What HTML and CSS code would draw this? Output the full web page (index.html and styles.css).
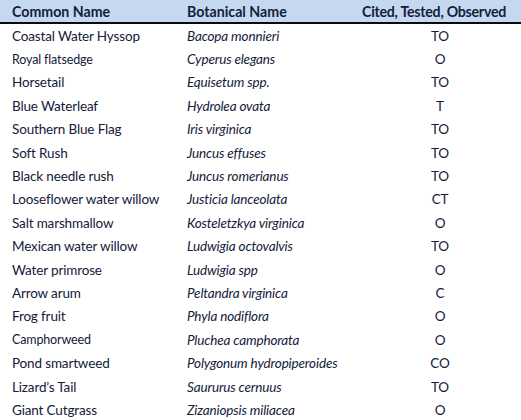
FILE: index.html
```html
<!DOCTYPE html>
<html>
<head>
<meta charset="utf-8">
<link rel="stylesheet" href="styles.css">
</head>
<body>
<table class="plants">
  <thead>
    <tr><th class="c1">Common Name</th><th class="c2">Botanical Name</th><th class="c3">Cited, Tested, Observed</th></tr>
  </thead>
  <tbody>
    <tr><td>Coastal Water Hyssop</td><td class="bot">Bacopa monnieri</td><td class="code">TO</td></tr>
    <tr><td class="small">Royal flatsedge</td><td class="bot">Cyperus elegans</td><td class="code">O</td></tr>
    <tr><td>Horsetail</td><td class="bot">Equisetum spp.</td><td class="code">TO</td></tr>
    <tr><td>Blue Waterleaf</td><td class="bot">Hydrolea ovata</td><td class="code">T</td></tr>
    <tr><td>Southern Blue Flag</td><td class="bot">Iris virginica</td><td class="code">TO</td></tr>
    <tr><td>Soft Rush</td><td class="bot">Juncus effuses</td><td class="code">TO</td></tr>
    <tr><td>Black needle rush</td><td class="bot">Juncus romerianus</td><td class="code">TO</td></tr>
    <tr><td>Looseflower water willow</td><td class="bot">Justicia lanceolata</td><td class="code">CT</td></tr>
    <tr><td>Salt marshmallow</td><td class="bot">Kosteletzkya virginica</td><td class="code">O</td></tr>
    <tr><td>Mexican water willow</td><td class="bot">Ludwigia octovalvis</td><td class="code">TO</td></tr>
    <tr><td>Water primrose</td><td class="bot">Ludwigia spp</td><td class="code">O</td></tr>
    <tr><td>Arrow arum</td><td class="bot">Peltandra virginica</td><td class="code">C</td></tr>
    <tr><td>Frog fruit</td><td class="bot">Phyla nodiflora</td><td class="code">O</td></tr>
    <tr><td class="small">Camphorweed</td><td class="bot">Pluchea camphorata</td><td class="code">O</td></tr>
    <tr><td>Pond smartweed</td><td class="bot">Polygonum hydropiperoides</td><td class="code">CO</td></tr>
    <tr><td>Lizard’s Tail</td><td class="bot">Saururus cernuus</td><td class="code">TO</td></tr>
    <tr><td>Giant Cutgrass</td><td class="bot">Zizaniopsis miliacea</td><td class="code">O</td></tr>
  </tbody>
</table>
</body>
</html>
```
FILE: styles.css
```css
html, body {
  margin: 0;
  padding: 0;
  background: #ffffff;
}
body {
  font-family: Lato, "Liberation Sans", sans-serif;
  font-size: 13.5px;
  letter-spacing: -0.15px;
  color: #14203a;
}
.plants {
  border-collapse: collapse;
  width: 521px;
  table-layout: fixed;
}
.plants th {
  background: #c6d8ef;
  font-weight: 700;
  font-size: 14.2px;
  letter-spacing: 0;
  height: 22px;
  padding: 0;
  border-bottom: 2px solid #0c0c0c;
  text-align: left;
  vertical-align: middle;
  white-space: nowrap;
}
.plants th.c1 { width: 175px; padding-left: 12px; }
.plants th.c2 { width: 175px; }
.plants th.c3 { text-align: right; padding-right: 15px; letter-spacing: -0.25px; }
.plants td {
  height: 23.4px;
  padding: 0;
  vertical-align: middle;
  white-space: nowrap;
}
.plants td:first-child { padding-left: 12px; }
.plants td.bot { font-style: italic; }
.plants td.code { text-align: center; padding-right: 3px; }
.plants td.small { font-size: 12.5px; }
```
